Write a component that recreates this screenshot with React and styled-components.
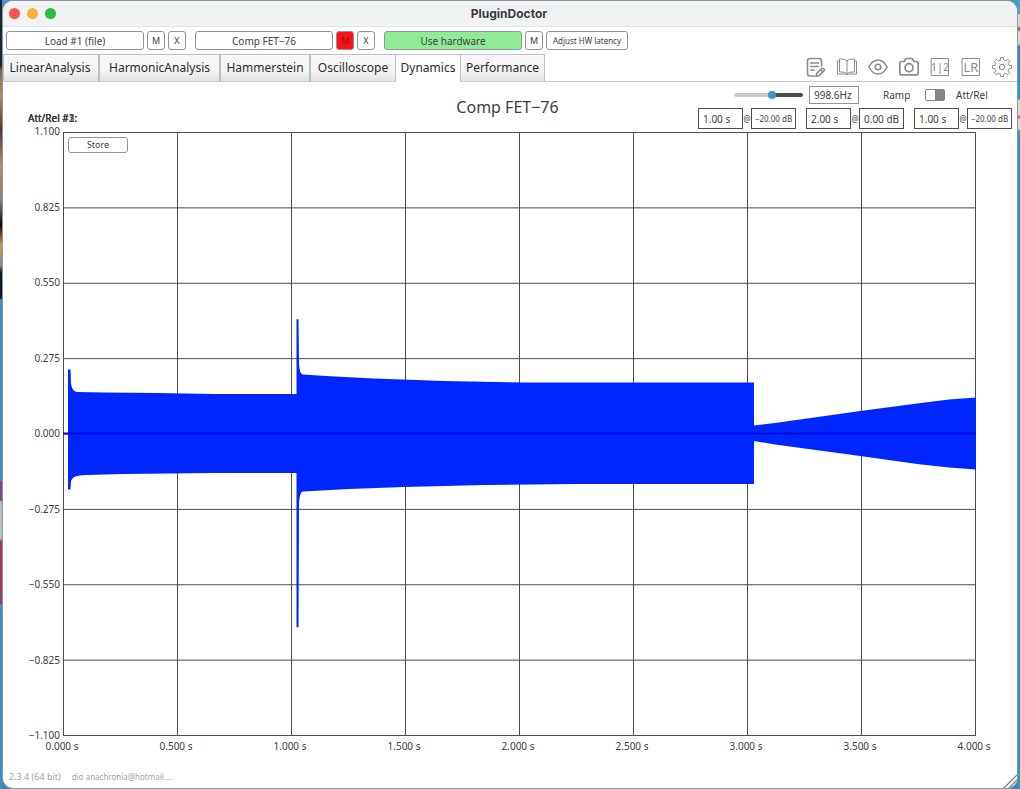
import { useState } from "react";
import styled, { createGlobalStyle } from "styled-components";

const tabs = [
  { name: "LinearAnalysis", width: 96 },
  { name: "HarmonicAnalysis", width: 121 },
  { name: "Hammerstein", width: 90 },
  { name: "Oscilloscope", width: 86 },
  { name: "Dynamics", width: 64 },
  { name: "Performance", width: 85 },
];

const levels = [
  "1.100",
  "0.825",
  "0.550",
  "0.275",
  "0.000",
  "−0.275",
  "−0.550",
  "−0.825",
  "−1.100",
];

const times = [0, 0.5, 1, 1.5, 2, 2.5, 3, 3.5, 4];

const stages = [
  { time: "1.00 s", level: "−20.00 dB", tight: true },
  { time: "2.00 s", level: "0.00 dB" },
  { time: "1.00 s", level: "−20.00 dB", tight: true },
];

export default function App() {
  const [activeTab, setActiveTab] = useState("Dynamics");

  return (
    <Desktop>
      <GlobalStyle />
      <Window>
        <TitleBar>
          <Lights>
            <Light $color="#fc5550" aria-label="Close" />
            <Light $color="#fbb03b" aria-label="Minimise" />
            <Light $color="#28bd43" aria-label="Zoom" />
          </Lights>
          <WindowTitle>PluginDoctor</WindowTitle>
        </TitleBar>

        <Toolbar>
          <ButtonGroup>
            <Button $width={138}>Load #1 (file)</Button>
            <Button $width={18} $size={9}>
              M
            </Button>
            <Button $width={18} $size={9}>
              X
            </Button>
          </ButtonGroup>
          <ButtonGroup>
            <Button $width={138}>Comp FET−76</Button>
            <Button $width={18} $size={9} $color="#ff1018" $text="#8a1a1c">
              M
            </Button>
            <Button $width={18} $size={9}>
              X
            </Button>
          </ButtonGroup>
          <ButtonGroup>
            <Button $width={138} $color="#90ec94">
              Use hardware
            </Button>
            <Button $width={18} $size={9}>
              M
            </Button>
            <Button $width={82} $size={8}>
              Adjust HW latency
            </Button>
          </ButtonGroup>
        </Toolbar>

        <TabBar>
          <Tabs role="tablist">
            {tabs.map((tab) => (
              <Tab
                key={tab.name}
                role="tab"
                aria-selected={tab.name === activeTab}
                $width={tab.width}
                $active={tab.name === activeTab}
                onClick={() => setActiveTab(tab.name)}
              >
                {tab.name}
              </Tab>
            ))}
          </Tabs>
          <Tools />
        </TabBar>

        <Header>
          <StageLabels>
            <span>Att/Rel #1:</span>
            <span>Att/Rel #2:</span>
            <span>Att/Rel #3:</span>
          </StageLabels>
          <PlotTitle>Comp FET−76</PlotTitle>
          <Settings>
            <SettingsRow>
              <Slider
                type="range"
                min="0"
                max="100"
                defaultValue="56"
                aria-label="Frequency"
              />
              <Field
                $width={50}
                $height={18}
                $frame="#8d9698"
                defaultValue="998.6Hz"
                aria-label="Frequency value"
              />
              <ModeLabel htmlFor="mode">Ramp</ModeLabel>
              <Switch id="mode" type="checkbox" defaultChecked />
              <ModeLabel htmlFor="mode">Att/Rel</ModeLabel>
            </SettingsRow>
            <StagesRow>
              {stages.map((stage, index) => (
                <Stage key={index}>
                  <Field
                    $width={45}
                    $height={21}
                    defaultValue={stage.time}
                    aria-label={`Time ${index + 1}`}
                  />
                  <At>@</At>
                  <Field
                    $width={45}
                    $height={21}
                    $tight={stage.tight}
                    defaultValue={stage.level}
                    aria-label={`Level ${index + 1}`}
                  />
                </Stage>
              ))}
            </StagesRow>
          </Settings>
        </Header>

        <PlotArea>
          <LevelAxis>
            {levels.map((level) => (
              <span key={level}>{level}</span>
            ))}
          </LevelAxis>
          <PlotBox>
            <Plot />
            <StoreButton>Store</StoreButton>
          </PlotBox>
        </PlotArea>
        <TimeAxis>
          {times.map((time) => (
            <span key={time}>{time.toFixed(3)} s</span>
          ))}
        </TimeAxis>

        <Footer>
          <span>2.3.4 (64 bit)</span>
          <Licence>dio anachronia@hotmail.…</Licence>
          <Grip viewBox="0 0 14 14" aria-hidden="true">
            <path d="M1 14 14 1M6 14 14 6M10 14 14 10" />
          </Grip>
        </Footer>
      </Window>
    </Desktop>
  );
}

function Plot() {
  return (
    <PlotSvg viewBox="0 0 913 605" preserveAspectRatio="none">
      <g stroke="#4c4c4c" strokeWidth="1" shapeRendering="crispEdges">
        {times.map((time) => (
          <line
            key={time}
            x1={time * 228 + 0.5}
            x2={time * 228 + 0.5}
            y1="0"
            y2="605"
          />
        ))}
        {levels.map((level, index) => (
          <line
            key={level}
            x1="0"
            x2="913"
            y1={index * 75.5 + 0.5}
            y2={index * 75.5 + 0.5}
          />
        ))}
      </g>
      {/* envelope of the test tone: onset, overshoot, release */}
      <path
        fill="#0026ff"
        transform="translate(1 0)"
        d="M4 238H6.500L7 252Q8 260 13 260.500L40 261Q90 261.500 150 262.500H232.500V187.500H234.500L235 232Q235.500 243 239 243L262 244.500L310 247L380 249.500L460 251H690V294L711 291.500L800 279L853 272L885 268L912 266V338L885 336L853 332.500L800 325L711 313L690 309.500V352.500H510L420 353.500L340 355.500L285 357.500L239 360Q235.500 360 235 372L234.500 496H232.500V341.500H150L60 342.500L22 343.500Q8 343.500 7 350L6.500 358H4Z"
      />
      <path d="M0 302H913" stroke="#0505e6" strokeWidth="2" />
    </PlotSvg>
  );
}

function gearPath(teeth) {
  const points = [];
  const step = (Math.PI * 2) / teeth;
  for (let i = 0; i < teeth; i++) {
    [
      [-0.32, 7.2],
      [-0.18, 9.6],
      [0.18, 9.6],
      [0.32, 7.2],
    ].forEach(([offset, radius]) => {
      const angle = (i + offset) * step;
      points.push(
        `${(10 + radius * Math.sin(angle)).toFixed(2)} ${(10 - radius * Math.cos(angle)).toFixed(2)}`
      );
    });
  }
  return `M${points.join("L")}Z`;
}

function Tools() {
  return (
    <ToolList>
      <Tool aria-label="Notes">
        <Icon viewBox="0 0 20 20" $weight={1.6}>
          <path d="M8.500 19H4Q1.500 19 1.500 16.500V4Q1.500 1.500 4 1.500H13Q15.500 1.500 15.500 4V9M4.500 6H12.500M4.500 9.500H12.500M4.500 13H8.500" />
          <path d="M10 19.500 10.800 16.300 15.700 11.600Q17 10.800 18 12Q18.800 13 17.900 14L13 18.700ZM14.500 12.700 16.900 15" />
        </Icon>
      </Tool>
      <Tool aria-label="Manual">
        <Icon viewBox="0 0 20 20" $weight={1}>
          <path d="M10 4Q8 2 5 2H2.500V15H5Q8 15 10 17Q12 15 15 15H17.500V2H15Q12 2 10 4ZM10 4V17M2.500 4H.5V17H8.500L10 18L11.500 17H19.500V4H17.500" />
        </Icon>
      </Tool>
      <Tool aria-label="View">
        <Icon viewBox="0 0 20 20" $weight={1.6}>
          <path d="M.8 10Q4.500 3 10 3T19.200 10Q15.500 17 10 17T.8 10Z" />
          <circle cx="10" cy="10" r="2.800" />
        </Icon>
      </Tool>
      <Tool aria-label="Snapshot">
        <Icon viewBox="0 0 20 20" $weight={1.7}>
          <path d="M2.500 4.500H5L6.500 2Q6.800 1.500 7.500 1.500H12.500Q13.200 1.500 13.500 2L15 4.500H17.500Q19.200 4.500 19.200 6.200V16Q19.200 17.800 17.500 17.800H2.500Q.8 17.800 .8 16V6.200Q.8 4.500 2.500 4.500Z" />
          <circle cx="10" cy="10.700" r="4" />
        </Icon>
      </Tool>
      <Tool aria-label="Channels">
        <Icon viewBox="0 0 20 20" $weight={1}>
          <rect x="1.500" y="1.500" width="17" height="17" />
          <text x="10" y="14" fontSize="11">
            1|2
          </text>
        </Icon>
      </Tool>
      <Tool aria-label="Left and right">
        <Icon viewBox="0 0 20 20" $weight={1}>
          <rect x="1.500" y="1.500" width="17" height="17" />
          <text x="10" y="15" fontSize="13">
            LR
          </text>
        </Icon>
      </Tool>
      <Tool aria-label="Settings">
        <Icon viewBox="0 0 20 20" $weight={1}>
          <path d={gearPath(8)} />
          <circle cx="10" cy="10" r="2.700" />
        </Icon>
      </Tool>
    </ToolList>
  );
}

const GlobalStyle = createGlobalStyle`
  *, *::before, *::after {
    box-sizing: border-box;
  }
  body {
    margin: 0;
    font-family: "Noto Sans", "Open Sans", sans-serif;
    font-size: 10px;
    line-height: 12px;
    color: #404040;
  }
  button, input {
    font: inherit;
    color: inherit;
    margin: 0;
  }
`;

const Desktop = styled.div`
  display: flex;
  min-height: 100vh;
  padding: 1px 3px 1px 3px;
  background:
    linear-gradient(
        #1d2630 66px, #7d6350 70px, #b18a62 95px, #4b3a30 130px, #b08b6a 165px,
        #8a8078 200px, #0c0806 225px, #d99450 245px, #888 265px, #101820 273px,
        #101820 298px, #3f8fbd 300px, #3f8fbd 480px, #87417f 482px,
        #87417f 500px, #b8bfbd 502px, #b8bfbd 538px, #9c3a5c 542px,
        #9c3a5c 590px, #87417f 604px, #3f8fbd 605px
      )
      left / 2px 100% no-repeat,
    linear-gradient(
        #45a0d4 14px, #d8dad6 15px, #d8dad6 26px, #7a3c20 29px, #d8dad6 32px,
        #d8dad6 44px, #3585b0 46px, #3f8fbd 99px, #d8dad6 100px,
        #d8dad6 115px, #e03030 117px, #d8dad6 119px, #d8dad6 129px,
        #3f8fbd 131px
      )
      right / 3px 100% no-repeat,
    linear-gradient(#4796c4, #3a82aa);
`;

const Window = styled.main`
  flex: 1;
  min-width: 0;
  display: flex;
  flex-direction: column;
  overflow: hidden;
  border-radius: 10px;
  background: #fff;
  box-shadow: 0 0 0 1px #8a9aa2;
`;

const TitleBar = styled.header`
  display: grid;
  grid-template-columns: 1fr auto 1fr;
  align-items: center;
  height: 26px;
  padding: 0 8px 0 6px;
  background: #f1f2f4;
  border-bottom: 1px solid #dfe1e1;
`;

const Lights = styled.div`
  display: flex;
  gap: 7px;
`;

const Light = styled.button`
  width: 11px;
  height: 11px;
  padding: 0;
  border: 0;
  border-radius: 50%;
  background: ${({ $color }) => $color};
`;

const WindowTitle = styled.h1`
  margin: 0;
  font: bold 12px/16px Inter, sans-serif;
  color: #3b3b3b;
`;

const Toolbar = styled.div`
  display: flex;
  align-items: center;
  gap: 9px;
  height: 27px;
  padding: 0 3px;
`;

const ButtonGroup = styled.div`
  display: flex;
  gap: 3px;
`;

const Button = styled.button`
  width: ${({ $width }) => $width}px;
  height: 19px;
  padding: 0;
  border: 1px solid #8d9698;
  border-radius: 3px;
  background: ${({ $color }) => $color || "#fff"};
  color: ${({ $text }) => $text || "#404040"};
  font-size: ${({ $size }) => $size || 10}px;
  white-space: nowrap;
`;

const TabBar = styled.div`
  display: flex;
  justify-content: space-between;
  height: 28px;
  border-bottom: 1px solid #c6caca;
`;

const Tabs = styled.div`
  display: flex;
`;

const Tab = styled.button`
  width: ${({ $width }) => $width}px;
  height: ${({ $active }) => ($active ? 28 : 27)}px;
  padding: ${({ $active }) => ($active ? "0 0 1px" : "0")};
  border: 1px solid #b9c0c0;
  border-width: ${({ $active }) => ($active ? "1px 0 0" : "1px 1px 0")};
  background: ${({ $active }) =>
    $active ? "#fff" : "linear-gradient(#f8f8f8, #f4f4f4 60%, #e2e2e2)"};
  color: #2c2c2c;
  font-size: 12px;

  &:first-child {
    padding-right: 2px;
  }
`;

const ToolList = styled.div`
  display: flex;
  align-items: center;
  gap: 11px;
  padding: 0 5px 2px 0;
`;

const Tool = styled.button`
  display: flex;
  padding: 0;
  border: 0;
  background: none;
`;

const Icon = styled.svg`
  width: 20px;
  height: 20px;
  fill: none;
  stroke: #8c8c8c;
  stroke-width: ${({ $weight }) => $weight};
  stroke-linejoin: round;
  stroke-linecap: round;

  text {
    fill: #8c8c8c;
    stroke: none;
    text-anchor: middle;
  }
`;

const Header = styled.section`
  display: grid;
  grid-template-columns: 1fr auto 1fr;
  height: 50px;
  padding: 0 5px 0 25px;
`;

const StageLabels = styled.div`
  display: grid;
  align-self: end;
  justify-content: start;
  padding-bottom: 8px;

  span {
    grid-area: 1 / 1;
  }
`;

const PlotTitle = styled.h2`
  margin: 0;
  padding: 14px 25px 0 0;
  font-size: 16px;
  font-weight: normal;
  line-height: 22px;
`;

const Settings = styled.div`
  display: flex;
  flex-direction: column;
  align-items: flex-end;
  gap: 4px;
  padding-top: 4px;
`;

const SettingsRow = styled.div`
  display: flex;
  align-items: center;
  padding-right: 24px;
`;

const Slider = styled.input`
  appearance: none;
  width: 69px;
  height: 10px;
  margin-right: 6px;
  background: none;

  &::-webkit-slider-runnable-track {
    height: 4px;
    border-radius: 2px;
    background: linear-gradient(90deg, #cacaca 55%, #4d4d4d 55%);
  }

  &::-webkit-slider-thumb {
    appearance: none;
    width: 8px;
    height: 8px;
    margin-top: -2px;
    border-radius: 50%;
    background: #3d98c4;
  }
`;

const Field = styled.input`
  width: ${({ $width }) => $width}px;
  height: ${({ $height }) => $height}px;
  padding: 0 ${({ $tight }) => ($tight ? 2 : 4)}px;
  border: 1px solid ${({ $frame }) => $frame || "#4c4c4c"};
  border-radius: 0;
  background: #fff;
  font-size: ${({ $tight }) => ($tight ? 8 : 10)}px;
  text-align: ${({ $tight }) => ($tight ? "center" : "left")};
`;

const ModeLabel = styled.label`
  width: 32px;

  &:first-of-type {
    width: 26px;
    margin: 0 16px 0 24px;
  }
`;

const Switch = styled.input`
  appearance: none;
  width: 20px;
  height: 12px;
  margin-right: 11px;
  border: 1px solid #858585;
  border-radius: 2px;
  background: linear-gradient(90deg, #858585 50%, #fff 50%);

  &:checked {
    background: linear-gradient(90deg, #fff 50%, #858585 50%);
  }
`;

const StagesRow = styled.div`
  display: flex;
  gap: 10px;
`;

const Stage = styled.div`
  display: flex;
  align-items: center;
`;

const At = styled.span`
  width: 8px;
  text-align: center;
  font-size: 8px;
`;

const PlotArea = styled.section`
  flex: 1;
  display: flex;
  min-height: 200px;
  padding: 0 41px 0 0;
`;

const LevelAxis = styled.div`
  display: flex;
  flex-direction: column;
  justify-content: space-between;
  width: 60px;
  margin: -6px 0 -4px;
  padding-right: 3px;
  line-height: 10px;
  text-align: right;
`;

const PlotBox = styled.div`
  position: relative;
  flex: 1;
`;

const PlotSvg = styled.svg`
  position: absolute;
  width: 100%;
  height: 100%;
`;

const StoreButton = styled.button`
  position: absolute;
  top: 5px;
  left: 5px;
  width: 60px;
  height: 16px;
  padding: 0;
  border: 1px solid #8d9698;
  border-radius: 3px;
  background: #fff;
  font-size: 9px;
`;

const TimeAxis = styled.div`
  display: flex;
  justify-content: space-between;
  margin: 5px 20px 0 36px;
  line-height: 10px;

  span {
    width: 46px;
    text-align: center;
  }
`;

const Footer = styled.footer`
  display: flex;
  align-items: flex-end;
  height: 37px;
  padding-left: 6px;
  color: #a4a4a4;
  font-size: 9px;
  line-height: 22px;
`;

const Licence = styled.span`
  flex: 1;
  margin-left: 11px;
  font-size: 8px;
`;

const Grip = styled.svg`
  width: 14px;
  height: 14px;
  stroke: #777;
  stroke-width: 1.2;
`;
